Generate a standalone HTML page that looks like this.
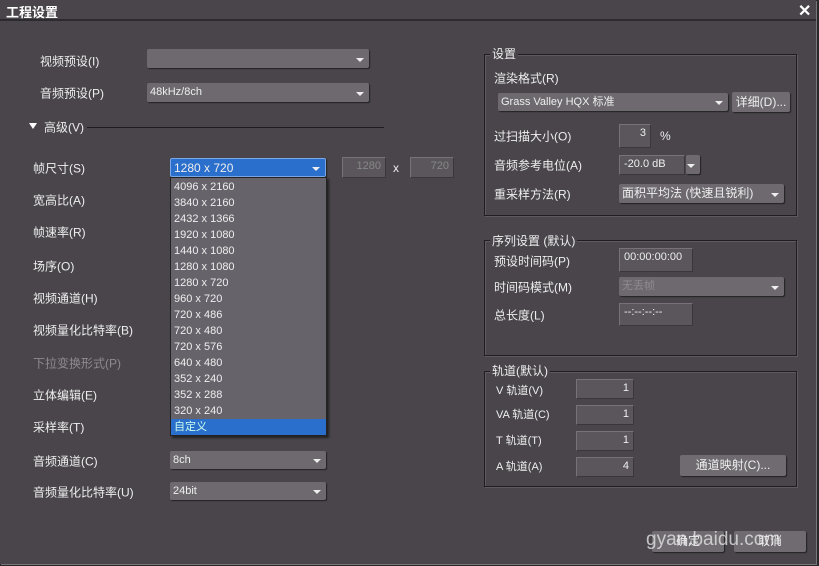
<!DOCTYPE html><html><head><meta charset="utf-8"><style>
*{margin:0;padding:0;box-sizing:border-box}
body{width:819px;height:566px;background:#2a282c;position:relative;overflow:hidden;font-family:"Liberation Sans","Noto Sans CJK SC",sans-serif;font-size:12px;color:#eee}
.win{position:absolute;left:0;top:0;width:816px;height:564px;background:#49454b;box-shadow:1px 1px 0 #777}
.title{position:absolute;left:0;top:0;width:816px;height:21px;background:#49454b;border-bottom:2px solid #2c2a2e;font-weight:bold;font-size:13px;padding:2px 6px;color:#fff}
.a{position:absolute;white-space:nowrap}
.l{position:absolute;white-space:nowrap;transform:translateY(-50%);color:#eee}
.cb{position:absolute;background:#6d696f;border-radius:2px;box-shadow:1px 1px 1px #222;color:#eee;font-size:11px;padding:2px 3px;line-height:14px}
.cb:after{content:"";position:absolute;right:5px;top:50%;margin-top:-1px;border-left:4px solid transparent;border-right:4px solid transparent;border-top:4px solid #eee}
.in{position:absolute;background:#5a565c;border:1px solid #767278;border-right-color:#3a373c;border-bottom-color:#3a373c;color:#eee;font-size:11px;padding:2px 4px;text-align:right}
.grp{position:absolute;border:1px solid #1f1d21;box-shadow:inset 1px 1px 0 #5e5a60,1px 1px 0 #5e5a60}
.gl{position:absolute;background:#49454b;padding:0 2px;white-space:nowrap}
.btn{position:absolute;background:#6f6b71;border-radius:2px;box-shadow:1px 1px 1px #222;text-align:center;line-height:20px;color:#eee}
.list{position:absolute;left:170px;top:177px;width:157px;height:259px;background:#67636a;border:1px solid #222;box-shadow:2px 2px 2px #222}
.list div{height:16px;line-height:16px;padding-left:3px;font-size:11px}
</style></head><body>
<div class="win">
<div class="title">工程设置</div>
<div class="a" style="left:798px;top:1px;font-size:16px;font-weight:bold;color:#fff">✕</div>

<div class="l" style="left:40px;top:61px">视频预设(I)</div>
<div class="cb" style="left:147px;top:49px;width:222px;height:19px"></div>
<div class="l" style="left:40px;top:93px">音频预设(P)</div>
<div class="cb" style="left:147px;top:83px;width:222px;height:19px">48kHz/8ch</div>
<div class="a" style="left:29px;top:123px;border-left:4px solid transparent;border-right:4px solid transparent;border-top:6px solid #fff"></div>
<div class="l" style="left:44px;top:127px">高级(V)</div>
<div class="a" style="left:87px;top:127px;width:297px;height:1px;background:#1e1c20"></div>

<div class="l" style="left:33px;top:168px">帧尺寸(S)</div>
<div class="cb" style="left:170px;top:158px;width:156px;height:19px;background:#2a6fcc;border:1px solid #7aa8e8;font-size:12px">1280 x 720</div>
<div class="in" style="left:342px;top:157px;width:44px;height:21px;color:#888">1280</div>
<div class="a" style="left:393px;top:161px">x</div>
<div class="in" style="left:410px;top:157px;width:44px;height:21px;color:#888">720</div>
<div class="l" style="left:33px;top:200px">宽高比(A)</div>
<div class="l" style="left:33px;top:232px">帧速率(R)</div>
<div class="l" style="left:33px;top:266px">场序(O)</div>
<div class="l" style="left:33px;top:298px">视频通道(H)</div>
<div class="l" style="left:33px;top:330px">视频量化比特率(B)</div>
<div class="l" style="left:33px;top:363px;color:#8e8a90">下拉变换形式(P)</div>
<div class="l" style="left:33px;top:395px">立体编辑(E)</div>
<div class="l" style="left:33px;top:427px">采样率(T)</div>
<div class="l" style="left:33px;top:461px">音频通道(C)</div>
<div class="cb" style="left:170px;top:451px;width:156px;height:18px">8ch</div>
<div class="l" style="left:33px;top:492px">音频量化比特率(U)</div>
<div class="cb" style="left:170px;top:482px;width:156px;height:18px">24bit</div>

<div class="list" style="padding-top:1px">
<div>4096 x 2160</div><div>3840 x 2160</div><div>2432 x 1366</div><div>1920 x 1080</div><div>1440 x 1080</div><div>1280 x 1080</div><div>1280 x 720</div><div>960 x 720</div><div>720 x 486</div><div>720 x 480</div><div>720 x 576</div><div>640 x 480</div><div>352 x 240</div><div>352 x 288</div><div>320 x 240</div><div style="background:#2a6fcc;color:#cfe">自定义</div>
</div>

<div class="grp" style="left:484px;top:54px;width:313px;height:162px"></div>
<div class="gl" style="left:490px;top:45px">设置</div>
<div class="l" style="left:494px;top:78px">渲染格式(R)</div>
<div class="cb" style="left:498px;top:93px;width:230px;height:18px">Grass Valley HQX 标准</div>
<div class="btn" style="left:732px;top:92px;width:58px;height:20px">详细(D)...</div>
<div class="l" style="left:494px;top:136px">过扫描大小(O)</div>
<div class="in" style="left:619px;top:124px;width:32px;height:24px">3</div>
<div class="a" style="left:660px;top:129px">%</div>
<div class="l" style="left:494px;top:165px">音频参考电位(A)</div>
<div class="in" style="left:619px;top:155px;width:66px;height:20px;text-align:left">-20.0 dB</div>
<div class="cb" style="left:686px;top:155px;width:14px;height:19px"></div>
<div class="l" style="left:494px;top:194px">重采样方法(R)</div>
<div class="cb" style="left:619px;top:184px;width:165px;height:19px;font-size:12px">面积平均法 (快速且锐利)</div>

<div class="grp" style="left:484px;top:240px;width:313px;height:116px"></div>
<div class="gl" style="left:490px;top:232px">序列设置 (默认)</div>
<div class="l" style="left:494px;top:261px">预设时间码(P)</div>
<div class="in" style="left:619px;top:248px;width:74px;height:24px;text-align:left">00:00:00:00</div>
<div class="l" style="left:494px;top:287px">时间码模式(M)</div>
<div class="cb" style="left:619px;top:277px;width:165px;height:19px;color:#8e8a90">无丢帧</div>
<div class="l" style="left:494px;top:315px">总长度(L)</div>
<div class="in" style="left:619px;top:303px;width:74px;height:23px;text-align:left">--:--:--:--</div>

<div class="grp" style="left:484px;top:371px;width:313px;height:116px"></div>
<div class="gl" style="left:490px;top:362px">轨道(默认)</div>
<div class="l" style="left:496px;top:390px;font-size:11px">V 轨道(V)</div>
<div class="in" style="left:576px;top:379px;width:58px;height:20px">1</div>
<div class="l" style="left:496px;top:414px;font-size:11px">VA 轨道(C)</div>
<div class="in" style="left:576px;top:405px;width:58px;height:20px">1</div>
<div class="l" style="left:496px;top:440px;font-size:11px">T 轨道(T)</div>
<div class="in" style="left:576px;top:431px;width:58px;height:20px">1</div>
<div class="l" style="left:496px;top:466px;font-size:11px">A 轨道(A)</div>
<div class="in" style="left:576px;top:457px;width:58px;height:20px">4</div>
<div class="btn" style="left:680px;top:455px;width:106px;height:21px">通道映射(C)...</div>

<div class="btn" style="left:652px;top:531px;width:72px;height:21px">确定</div>
<div class="btn" style="left:734px;top:531px;width:72px;height:21px">取消</div>
<div class="a" style="left:646px;top:529px;font-size:19px;color:rgba(235,235,235,.75)">gyan.baidu.com</div>
</div>
</body></html>
